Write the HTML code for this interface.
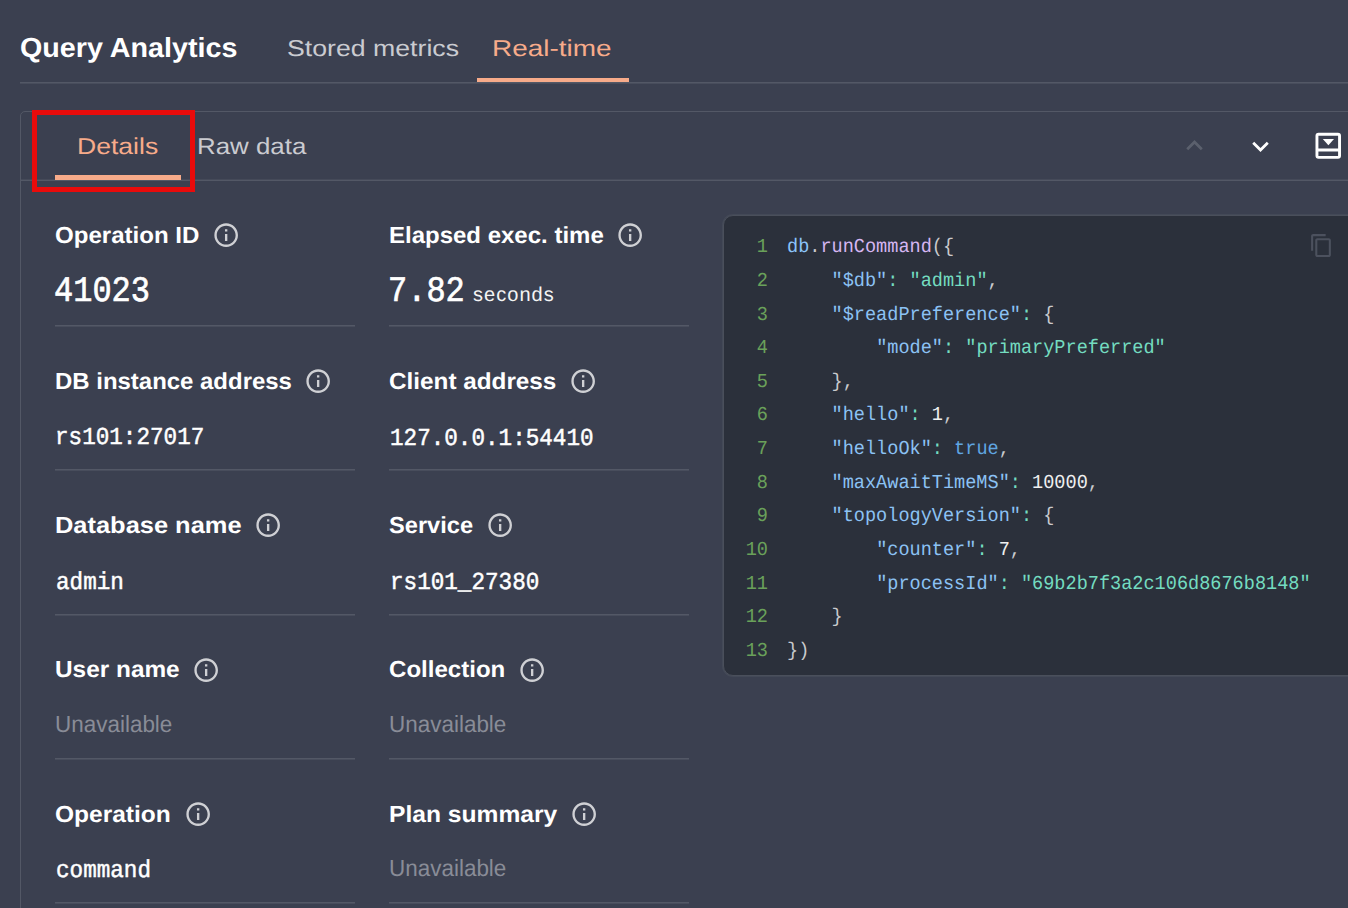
<!DOCTYPE html>
<html><head><meta charset="utf-8"><style>
html,body{margin:0;padding:0;}
body{width:1348px;height:908px;overflow:hidden;background:#3b4050;position:relative;}
.t{position:absolute;white-space:pre;line-height:1;text-rendering:geometricPrecision;}
.r{position:absolute;}
.ic{position:absolute;}
</style></head><body>
<div class="t" style="left:20.00px;top:34.33px;font-family:'Liberation Sans', sans-serif;font-size:27.60px;font-weight:700;color:#ffffff;transform:scale(1.0400,1.0000);transform-origin:0 0;">Query Analytics</div>
<div class="t" style="left:286.60px;top:36.68px;font-family:'Liberation Sans', sans-serif;font-size:23.00px;font-weight:400;color:#cacbd0;transform:scale(1.1600,1.0000);transform-origin:0 0;">Stored metrics</div>
<div class="t" style="left:492.40px;top:36.68px;font-family:'Liberation Sans', sans-serif;font-size:23.00px;font-weight:400;color:#f7ab8a;transform:scale(1.2150,1.0000);transform-origin:0 0;">Real-time</div>
<div class="r" style="left:20px;top:82px;width:1328px;height:1px;background:rgb(83, 88, 102)"></div>
<div class="r" style="left:20px;top:83px;width:1328px;height:1px;background:rgb(72, 77, 92)"></div>
<div class="r" style="left:477px;top:78px;width:152px;height:4px;background:#f7ab8a"></div>
<div class="r" style="left:20px;top:111px;width:1400px;height:900px;border:1px solid #535866;border-radius:5px;box-sizing:border-box"></div>
<div class="r" style="left:21px;top:179px;width:1327px;height:1px;background:rgb(69, 74, 89)"></div>
<div class="r" style="left:21px;top:180px;width:1327px;height:1px;background:rgb(83, 88, 102)"></div>
<div class="t" style="left:77.00px;top:134.63px;font-family:'Liberation Sans', sans-serif;font-size:23.00px;font-weight:400;color:#f7ab8a;transform:scale(1.1550,1.0000);transform-origin:0 0;">Details</div>
<div class="t" style="left:196.80px;top:134.63px;font-family:'Liberation Sans', sans-serif;font-size:23.00px;font-weight:400;color:#cacbd0;transform:scale(1.1250,1.0000);transform-origin:0 0;">Raw data</div>
<div class="r" style="left:55px;top:175px;width:126px;height:5px;background:#f7ab8a"></div>
<div class="r" style="left:32px;top:110px;width:163px;height:82px;border:5px solid #e90b0b;box-sizing:border-box"></div>
<svg class="ic" style="left:1177.8px;top:129.0px" width="33" height="33" viewBox="0 0 24 24"><path fill="#5b606d" d="M7.41 15.41 12 10.83l4.59 4.58L18 14l-6-6-6 6z"/></svg>
<svg class="ic" style="left:1244.0px;top:129.8px" width="33" height="33" viewBox="0 0 24 24"><path fill="#ffffff" d="M7.41 8.59 12 13.17l4.59-4.58L18 10l-6 6-6-6 1.41-1.41z"/></svg>
<svg class="ic" style="left:1314px;top:131px" width="30" height="30" viewBox="0 0 30 30"><rect x="2.95" y="3.25" width="22.6" height="23.1" rx="1.6" fill="none" stroke="#fff" stroke-width="2.9"/><rect x="2" y="17.5" width="24" height="3" fill="#fff"/><path d="M8.8 8h11.2l-5.6 6.2z" fill="#fff"/></svg>
<div class="t" style="left:55.00px;top:223.51px;font-family:'Liberation Sans', sans-serif;font-size:23.25px;font-weight:700;color:#ffffff;transform:scale(1.0349,1.0000);transform-origin:0 0;">Operation ID</div>
<div class="t" style="left:389.00px;top:223.51px;font-family:'Liberation Sans', sans-serif;font-size:23.25px;font-weight:700;color:#ffffff;transform:scale(1.0320,1.0000);transform-origin:0 0;">Elapsed exec. time</div>
<div class="r" style="left:55px;top:325px;width:300px;height:1px;background:rgb(83, 88, 102)"></div>
<div class="r" style="left:55px;top:326px;width:300px;height:1px;background:rgb(72, 77, 92)"></div>
<div class="r" style="left:389px;top:325px;width:300px;height:1px;background:rgb(83, 88, 102)"></div>
<div class="r" style="left:389px;top:326px;width:300px;height:1px;background:rgb(72, 77, 92)"></div>
<div class="t" style="left:55.00px;top:369.71px;font-family:'Liberation Sans', sans-serif;font-size:23.25px;font-weight:700;color:#ffffff;transform:scale(1.0300,1.0000);transform-origin:0 0;">DB instance address</div>
<div class="t" style="left:389.00px;top:369.71px;font-family:'Liberation Sans', sans-serif;font-size:23.25px;font-weight:700;color:#ffffff;transform:scale(1.0447,1.0000);transform-origin:0 0;">Client address</div>
<div class="r" style="left:55px;top:469px;width:300px;height:1px;background:rgb(83, 88, 102)"></div>
<div class="r" style="left:55px;top:470px;width:300px;height:1px;background:rgb(72, 77, 92)"></div>
<div class="r" style="left:389px;top:469px;width:300px;height:1px;background:rgb(83, 88, 102)"></div>
<div class="r" style="left:389px;top:470px;width:300px;height:1px;background:rgb(72, 77, 92)"></div>
<div class="t" style="left:55.00px;top:513.71px;font-family:'Liberation Sans', sans-serif;font-size:23.25px;font-weight:700;color:#ffffff;transform:scale(1.0935,1.0000);transform-origin:0 0;">Database name</div>
<div class="t" style="left:389.00px;top:513.71px;font-family:'Liberation Sans', sans-serif;font-size:23.25px;font-weight:700;color:#ffffff;transform:scale(1.0154,1.0000);transform-origin:0 0;">Service</div>
<div class="r" style="left:55px;top:614px;width:300px;height:1px;background:rgb(83, 88, 102)"></div>
<div class="r" style="left:55px;top:615px;width:300px;height:1px;background:rgb(72, 77, 92)"></div>
<div class="r" style="left:389px;top:614px;width:300px;height:1px;background:rgb(83, 88, 102)"></div>
<div class="r" style="left:389px;top:615px;width:300px;height:1px;background:rgb(72, 77, 92)"></div>
<div class="t" style="left:55.00px;top:658.21px;font-family:'Liberation Sans', sans-serif;font-size:23.25px;font-weight:700;color:#ffffff;transform:scale(1.0486,1.0000);transform-origin:0 0;">User name</div>
<div class="t" style="left:389.00px;top:658.21px;font-family:'Liberation Sans', sans-serif;font-size:23.25px;font-weight:700;color:#ffffff;transform:scale(1.0349,1.0000);transform-origin:0 0;">Collection</div>
<div class="r" style="left:55px;top:758px;width:300px;height:1px;background:rgb(83, 88, 102)"></div>
<div class="r" style="left:55px;top:759px;width:300px;height:1px;background:rgb(72, 77, 92)"></div>
<div class="r" style="left:389px;top:758px;width:300px;height:1px;background:rgb(83, 88, 102)"></div>
<div class="r" style="left:389px;top:759px;width:300px;height:1px;background:rgb(72, 77, 92)"></div>
<div class="t" style="left:55.00px;top:802.71px;font-family:'Liberation Sans', sans-serif;font-size:23.25px;font-weight:700;color:#ffffff;transform:scale(1.0545,1.0000);transform-origin:0 0;">Operation</div>
<div class="t" style="left:389.00px;top:802.71px;font-family:'Liberation Sans', sans-serif;font-size:23.25px;font-weight:700;color:#ffffff;transform:scale(1.0584,1.0000);transform-origin:0 0;">Plan summary</div>
<div class="r" style="left:55px;top:902px;width:300px;height:1px;background:rgb(83, 88, 102)"></div>
<div class="r" style="left:55px;top:903px;width:300px;height:1px;background:rgb(72, 77, 92)"></div>
<div class="r" style="left:389px;top:902px;width:300px;height:1px;background:rgb(83, 88, 102)"></div>
<div class="r" style="left:389px;top:903px;width:300px;height:1px;background:rgb(72, 77, 92)"></div>
<svg class="ic" style="left:211.94px;top:221.24px" width="28.32" height="28.32" viewBox="0 0 24 24"><path fill="#cfd0d4" d="M11 7h2v2h-2zm0 4h2v6h-2zm1-9C6.48 2 2 6.48 2 12s4.48 10 10 10 10-4.48 10-10S17.52 2 12 2zm0 18c-4.41 0-8-3.59-8-8s3.59-8 8-8 8 3.59 8 8-3.59 8-8 8z"/></svg>
<svg class="ic" style="left:616.24px;top:221.24px" width="28.32" height="28.32" viewBox="0 0 24 24"><path fill="#cfd0d4" d="M11 7h2v2h-2zm0 4h2v6h-2zm1-9C6.48 2 2 6.48 2 12s4.48 10 10 10 10-4.48 10-10S17.52 2 12 2zm0 18c-4.41 0-8-3.59-8-8s3.59-8 8-8 8 3.59 8 8-3.59 8-8 8z"/></svg>
<svg class="ic" style="left:304.04px;top:367.44px" width="28.32" height="28.32" viewBox="0 0 24 24"><path fill="#cfd0d4" d="M11 7h2v2h-2zm0 4h2v6h-2zm1-9C6.48 2 2 6.48 2 12s4.48 10 10 10 10-4.48 10-10S17.52 2 12 2zm0 18c-4.41 0-8-3.59-8-8s3.59-8 8-8 8 3.59 8 8-3.59 8-8 8z"/></svg>
<svg class="ic" style="left:568.94px;top:367.44px" width="28.32" height="28.32" viewBox="0 0 24 24"><path fill="#cfd0d4" d="M11 7h2v2h-2zm0 4h2v6h-2zm1-9C6.48 2 2 6.48 2 12s4.48 10 10 10 10-4.48 10-10S17.52 2 12 2zm0 18c-4.41 0-8-3.59-8-8s3.59-8 8-8 8 3.59 8 8-3.59 8-8 8z"/></svg>
<svg class="ic" style="left:253.94px;top:511.44px" width="28.32" height="28.32" viewBox="0 0 24 24"><path fill="#cfd0d4" d="M11 7h2v2h-2zm0 4h2v6h-2zm1-9C6.48 2 2 6.48 2 12s4.48 10 10 10 10-4.48 10-10S17.52 2 12 2zm0 18c-4.41 0-8-3.59-8-8s3.59-8 8-8 8 3.59 8 8-3.59 8-8 8z"/></svg>
<svg class="ic" style="left:485.74px;top:511.44px" width="28.32" height="28.32" viewBox="0 0 24 24"><path fill="#cfd0d4" d="M11 7h2v2h-2zm0 4h2v6h-2zm1-9C6.48 2 2 6.48 2 12s4.48 10 10 10 10-4.48 10-10S17.52 2 12 2zm0 18c-4.41 0-8-3.59-8-8s3.59-8 8-8 8 3.59 8 8-3.59 8-8 8z"/></svg>
<svg class="ic" style="left:192.24px;top:655.94px" width="28.32" height="28.32" viewBox="0 0 24 24"><path fill="#cfd0d4" d="M11 7h2v2h-2zm0 4h2v6h-2zm1-9C6.48 2 2 6.48 2 12s4.48 10 10 10 10-4.48 10-10S17.52 2 12 2zm0 18c-4.41 0-8-3.59-8-8s3.59-8 8-8 8 3.59 8 8-3.59 8-8 8z"/></svg>
<svg class="ic" style="left:518.34px;top:655.94px" width="28.32" height="28.32" viewBox="0 0 24 24"><path fill="#cfd0d4" d="M11 7h2v2h-2zm0 4h2v6h-2zm1-9C6.48 2 2 6.48 2 12s4.48 10 10 10 10-4.48 10-10S17.52 2 12 2zm0 18c-4.41 0-8-3.59-8-8s3.59-8 8-8 8 3.59 8 8-3.59 8-8 8z"/></svg>
<svg class="ic" style="left:183.84px;top:800.44px" width="28.32" height="28.32" viewBox="0 0 24 24"><path fill="#cfd0d4" d="M11 7h2v2h-2zm0 4h2v6h-2zm1-9C6.48 2 2 6.48 2 12s4.48 10 10 10 10-4.48 10-10S17.52 2 12 2zm0 18c-4.41 0-8-3.59-8-8s3.59-8 8-8 8 3.59 8 8-3.59 8-8 8z"/></svg>
<svg class="ic" style="left:570.04px;top:800.44px" width="28.32" height="28.32" viewBox="0 0 24 24"><path fill="#cfd0d4" d="M11 7h2v2h-2zm0 4h2v6h-2zm1-9C6.48 2 2 6.48 2 12s4.48 10 10 10 10-4.48 10-10S17.52 2 12 2zm0 18c-4.41 0-8-3.59-8-8s3.59-8 8-8 8 3.59 8 8-3.59 8-8 8z"/></svg>
<div class="t" style="left:54.00px;top:274.24px;font-family:'Liberation Mono', monospace;font-size:32.00px;font-weight:400;color:#ffffff;-webkit-text-stroke:0.6px #ffffff;transform:scale(1.0000,1.1200);transform-origin:0 0;">41023</div>
<div class="t" style="left:388.00px;top:274.24px;font-family:'Liberation Mono', monospace;font-size:32.00px;font-weight:400;color:#ffffff;-webkit-text-stroke:0.6px #ffffff;transform:scale(1.0000,1.1200);transform-origin:0 0;">7.82</div>
<div class="t" style="left:473.00px;top:284.87px;font-family:'Liberation Sans', sans-serif;font-size:20.00px;font-weight:400;color:#f4f4f4;letter-spacing:1.05px;">seconds</div>
<div class="t" style="left:54.50px;top:425.29px;font-family:'Liberation Mono', monospace;font-size:22.40px;font-weight:400;color:#ffffff;-webkit-text-stroke:0.45px #ffffff;transform:scale(1.0100,1.0900);transform-origin:0 0;">rs101:27017</div>
<div class="t" style="left:389.50px;top:425.69px;font-family:'Liberation Mono', monospace;font-size:22.40px;font-weight:400;color:#ffffff;-webkit-text-stroke:0.45px #ffffff;transform:scale(1.0100,1.0900);transform-origin:0 0;">127.0.0.1:54410</div>
<div class="t" style="left:55.50px;top:569.69px;font-family:'Liberation Mono', monospace;font-size:22.40px;font-weight:400;color:#ffffff;-webkit-text-stroke:0.45px #ffffff;transform:scale(1.0100,1.0900);transform-origin:0 0;">admin</div>
<div class="t" style="left:389.50px;top:569.69px;font-family:'Liberation Mono', monospace;font-size:22.40px;font-weight:400;color:#ffffff;-webkit-text-stroke:0.45px #ffffff;transform:scale(1.0100,1.0900);transform-origin:0 0;">rs101_27380</div>
<div class="t" style="left:55.00px;top:713.19px;font-family:'Liberation Sans', sans-serif;font-size:23.40px;font-weight:400;color:#898c97;transform:scale(0.9600,1.0000);transform-origin:0 0;">Unavailable</div>
<div class="t" style="left:389.00px;top:713.19px;font-family:'Liberation Sans', sans-serif;font-size:23.40px;font-weight:400;color:#898c97;transform:scale(0.9600,1.0000);transform-origin:0 0;">Unavailable</div>
<div class="t" style="left:55.50px;top:857.89px;font-family:'Liberation Mono', monospace;font-size:22.40px;font-weight:400;color:#ffffff;-webkit-text-stroke:0.45px #ffffff;transform:scale(1.0100,1.0900);transform-origin:0 0;">command</div>
<div class="t" style="left:389.00px;top:857.19px;font-family:'Liberation Sans', sans-serif;font-size:23.40px;font-weight:400;color:#898c97;transform:scale(0.9600,1.0000);transform-origin:0 0;">Unavailable</div>
<div class="r" style="left:723px;top:215px;width:700px;height:461px;background:#2b303b;border:1px solid #4a4f5b;box-shadow:0 0 0 1px rgba(75,80,93,0.55);border-radius:10px;box-sizing:border-box"></div>
<div class="t" style="left:756.86px;top:238.22px;font-family:'Liberation Mono', monospace;font-size:18.57px;font-weight:400;color:#6aa15a;transform:scale(1.0000,1.0600);transform-origin:0 0;">1</div>
<div class="t" style="left:787.00px;top:238.22px;font-family:'Liberation Mono', monospace;font-size:18.57px;font-weight:400;color:#f0f0f0;transform:scale(1.0000,1.0600);transform-origin:0 0;"><span style="color:#8cc4fa">db</span><span style="color:#c9cacd">.</span><span style="color:#d6b6f2">runCommand</span><span style="color:#c9cacd">({</span></div>
<div class="t" style="left:756.86px;top:271.86px;font-family:'Liberation Mono', monospace;font-size:18.57px;font-weight:400;color:#6aa15a;transform:scale(1.0000,1.0600);transform-origin:0 0;">2</div>
<div class="t" style="left:787.00px;top:271.86px;font-family:'Liberation Mono', monospace;font-size:18.57px;font-weight:400;color:#f0f0f0;transform:scale(1.0000,1.0600);transform-origin:0 0;">    <span style="color:#8cc2f4">&quot;$db&quot;</span><span style="color:#74dcc0">:</span> <span style="color:#74dcc0">&quot;admin&quot;</span><span style="color:#c9cacd">,</span></div>
<div class="t" style="left:756.86px;top:305.50px;font-family:'Liberation Mono', monospace;font-size:18.57px;font-weight:400;color:#6aa15a;transform:scale(1.0000,1.0600);transform-origin:0 0;">3</div>
<div class="t" style="left:787.00px;top:305.50px;font-family:'Liberation Mono', monospace;font-size:18.57px;font-weight:400;color:#f0f0f0;transform:scale(1.0000,1.0600);transform-origin:0 0;">    <span style="color:#8cc2f4">&quot;$readPreference&quot;</span><span style="color:#74dcc0">:</span> <span style="color:#c9cacd">{</span></div>
<div class="t" style="left:756.86px;top:339.14px;font-family:'Liberation Mono', monospace;font-size:18.57px;font-weight:400;color:#6aa15a;transform:scale(1.0000,1.0600);transform-origin:0 0;">4</div>
<div class="t" style="left:787.00px;top:339.14px;font-family:'Liberation Mono', monospace;font-size:18.57px;font-weight:400;color:#f0f0f0;transform:scale(1.0000,1.0600);transform-origin:0 0;">        <span style="color:#8cc2f4">&quot;mode&quot;</span><span style="color:#74dcc0">:</span> <span style="color:#74dcc0">&quot;primaryPreferred&quot;</span></div>
<div class="t" style="left:756.86px;top:372.78px;font-family:'Liberation Mono', monospace;font-size:18.57px;font-weight:400;color:#6aa15a;transform:scale(1.0000,1.0600);transform-origin:0 0;">5</div>
<div class="t" style="left:787.00px;top:372.78px;font-family:'Liberation Mono', monospace;font-size:18.57px;font-weight:400;color:#f0f0f0;transform:scale(1.0000,1.0600);transform-origin:0 0;">    <span style="color:#c9cacd">},</span></div>
<div class="t" style="left:756.86px;top:406.42px;font-family:'Liberation Mono', monospace;font-size:18.57px;font-weight:400;color:#6aa15a;transform:scale(1.0000,1.0600);transform-origin:0 0;">6</div>
<div class="t" style="left:787.00px;top:406.42px;font-family:'Liberation Mono', monospace;font-size:18.57px;font-weight:400;color:#f0f0f0;transform:scale(1.0000,1.0600);transform-origin:0 0;">    <span style="color:#8cc2f4">&quot;hello&quot;</span><span style="color:#74dcc0">:</span> <span style="color:#f0f0f0">1</span><span style="color:#c9cacd">,</span></div>
<div class="t" style="left:756.86px;top:440.06px;font-family:'Liberation Mono', monospace;font-size:18.57px;font-weight:400;color:#6aa15a;transform:scale(1.0000,1.0600);transform-origin:0 0;">7</div>
<div class="t" style="left:787.00px;top:440.06px;font-family:'Liberation Mono', monospace;font-size:18.57px;font-weight:400;color:#f0f0f0;transform:scale(1.0000,1.0600);transform-origin:0 0;">    <span style="color:#8cc2f4">&quot;helloOk&quot;</span><span style="color:#74dcc0">:</span> <span style="color:#60a6e2">true</span><span style="color:#c9cacd">,</span></div>
<div class="t" style="left:756.86px;top:473.70px;font-family:'Liberation Mono', monospace;font-size:18.57px;font-weight:400;color:#6aa15a;transform:scale(1.0000,1.0600);transform-origin:0 0;">8</div>
<div class="t" style="left:787.00px;top:473.70px;font-family:'Liberation Mono', monospace;font-size:18.57px;font-weight:400;color:#f0f0f0;transform:scale(1.0000,1.0600);transform-origin:0 0;">    <span style="color:#8cc2f4">&quot;maxAwaitTimeMS&quot;</span><span style="color:#74dcc0">:</span> <span style="color:#f0f0f0">10000</span><span style="color:#c9cacd">,</span></div>
<div class="t" style="left:756.86px;top:507.34px;font-family:'Liberation Mono', monospace;font-size:18.57px;font-weight:400;color:#6aa15a;transform:scale(1.0000,1.0600);transform-origin:0 0;">9</div>
<div class="t" style="left:787.00px;top:507.34px;font-family:'Liberation Mono', monospace;font-size:18.57px;font-weight:400;color:#f0f0f0;transform:scale(1.0000,1.0600);transform-origin:0 0;">    <span style="color:#8cc2f4">&quot;topologyVersion&quot;</span><span style="color:#74dcc0">:</span> <span style="color:#c9cacd">{</span></div>
<div class="t" style="left:745.72px;top:540.98px;font-family:'Liberation Mono', monospace;font-size:18.57px;font-weight:400;color:#6aa15a;transform:scale(1.0000,1.0600);transform-origin:0 0;">10</div>
<div class="t" style="left:787.00px;top:540.98px;font-family:'Liberation Mono', monospace;font-size:18.57px;font-weight:400;color:#f0f0f0;transform:scale(1.0000,1.0600);transform-origin:0 0;">        <span style="color:#8cc2f4">&quot;counter&quot;</span><span style="color:#74dcc0">:</span> <span style="color:#f0f0f0">7</span><span style="color:#c9cacd">,</span></div>
<div class="t" style="left:745.72px;top:574.62px;font-family:'Liberation Mono', monospace;font-size:18.57px;font-weight:400;color:#6aa15a;transform:scale(1.0000,1.0600);transform-origin:0 0;">11</div>
<div class="t" style="left:787.00px;top:574.62px;font-family:'Liberation Mono', monospace;font-size:18.57px;font-weight:400;color:#f0f0f0;transform:scale(1.0000,1.0600);transform-origin:0 0;">        <span style="color:#8cc2f4">&quot;processId&quot;</span><span style="color:#74dcc0">:</span> <span style="color:#74dcc0">&quot;69b2b7f3a2c106d8676b8148&quot;</span></div>
<div class="t" style="left:745.72px;top:608.26px;font-family:'Liberation Mono', monospace;font-size:18.57px;font-weight:400;color:#6aa15a;transform:scale(1.0000,1.0600);transform-origin:0 0;">12</div>
<div class="t" style="left:787.00px;top:608.26px;font-family:'Liberation Mono', monospace;font-size:18.57px;font-weight:400;color:#f0f0f0;transform:scale(1.0000,1.0600);transform-origin:0 0;">    <span style="color:#c9cacd">}</span></div>
<div class="t" style="left:745.72px;top:641.90px;font-family:'Liberation Mono', monospace;font-size:18.57px;font-weight:400;color:#6aa15a;transform:scale(1.0000,1.0600);transform-origin:0 0;">13</div>
<div class="t" style="left:787.00px;top:641.90px;font-family:'Liberation Mono', monospace;font-size:18.57px;font-weight:400;color:#f0f0f0;transform:scale(1.0000,1.0600);transform-origin:0 0;"><span style="color:#c9cacd">})</span></div>
<svg class="ic" style="left:1309.2px;top:232.9px" width="25" height="25" viewBox="0 0 24 24"><path fill="#4c515e" d="M16 1H4c-1.1 0-2 .9-2 2v14h2V3h12V1zm3 4H8c-1.1 0-2 .9-2 2v14c0 1.1.9 2 2 2h11c1.1 0 2-.9 2-2V7c0-1.1-.9-2-2-2zm0 16H8V7h11v14z"/></svg>
</body></html>
